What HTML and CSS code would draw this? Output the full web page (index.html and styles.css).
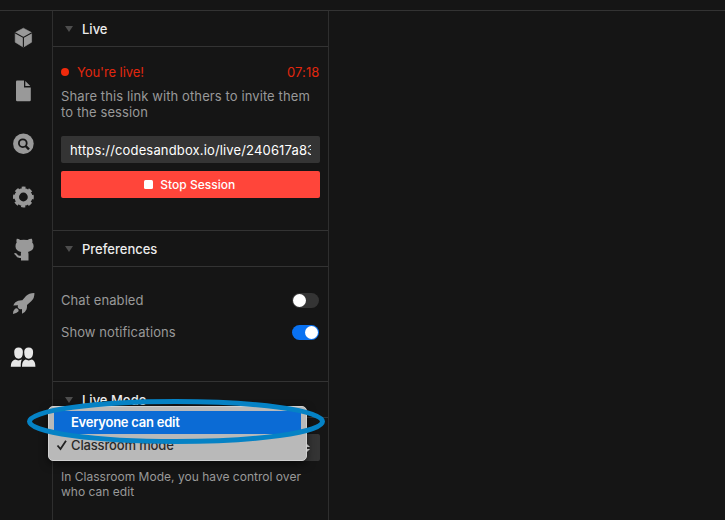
FILE: index.html
```html
<!DOCTYPE html>
<html lang="en">
<head>
<meta charset="utf-8">
<title>Live session</title>
<link rel="stylesheet" href="styles.css">
</head>
<body>
<div class="topbar"></div>
<div class="workspace">
  <nav class="rail">
    <a class="rail-item"><svg width="26" height="26" viewBox="0 0 26 26"><path d="M13.4 3.2 L21.6 7.6 V17.2 L13.4 22.2 L5.2 17.2 V7.6 Z" fill="#999" stroke="#999" stroke-width=".6" stroke-linejoin="round"/><path d="M4.9 7.8 L13.4 12.4 L21.9 7.8 M13.4 12.4 V22.5" fill="none" stroke="#151515" stroke-width="1.1"/></svg></a>
    <a class="rail-item"><svg width="26" height="26" viewBox="0 0 26 26"><path d="M7 2.5 H14 V9.5 H20.8 V22 Q20.8 23.2 19.6 23.2 H7.2 Q6 23.2 6 22 V3.7 Q6 2.5 7 2.5 Z M15.3 3.1 L20.3 8.1 H15.3 Z" fill="#999"/></svg></a>
    <a class="rail-item"><svg width="26" height="26" viewBox="0 0 26 26"><circle cx="13.4" cy="12.8" r="10.3" fill="#999"/><circle cx="12.8" cy="12.2" r="3.9" fill="none" stroke="#151515" stroke-width="1.8"/><path d="M15.6 15 L19 18.4" stroke="#151515" stroke-width="2.4"/></svg></a>
    <a class="rail-item"><svg width="26" height="26" viewBox="0 0 26 26"><circle cx="13.4" cy="13" r="6.7" fill="none" stroke="#999" stroke-width="4.6"/><circle cx="13.4" cy="13" r="9.1" fill="none" stroke="#999" stroke-width="2.6" stroke-dasharray="4.1 3.05" stroke-dashoffset="2.05" transform="rotate(-90 13.4 13)"/></svg></a>
    <a class="rail-item"><svg width="26" height="26" viewBox="0 0 26 26"><path d="M6.8 1.8 Q8.2 1.6 10.3 3.1 Q13.5 2.4 17.5 3.1 Q19.7 1.6 21.8 1.8 Q22.8 3.6 22.2 5.6 Q23.8 7 23.6 9.6 Q23.4 13.8 18 15 Q18.6 16.1 18.5 17.6 V23.6 H11 V20.9 Q7 21.6 5.8 18.6 Q5.3 17.6 4.2 17 Q4 16.1 5.2 16.1 Q6.7 16.3 7.6 17.8 Q8.7 19.4 11 18.6 Q10.6 16.1 11.2 15 Q5.6 13.9 5.5 9.6 Q5.4 7 6.7 5.6 Q6.1 3.6 6.8 1.8 Z" fill="#999"/></svg></a>
    <a class="rail-item"><svg width="26" height="26" viewBox="0 0 26 26"><path d="M24.4 2 Q19.2 1.9 16 5 L12.3 9.2 Q8 9 5.4 11.2 Q4 12.5 3.3 14.5 L8 14.2 Q7.2 16.2 8.4 17.3 Q9.8 18.8 12 18 L12 22.8 Q15.6 21.2 16.6 18.3 Q17.2 16.5 17 14 L21.2 10.2 Q24.7 7 24.4 2 Z M7.3 17.5 Q9.5 19 8.4 20.6 Q6.6 22.5 2.9 22.9 Q3.1 19.4 5 17.8 Q6.2 16.8 7.3 17.5 Z" fill="#999"/></svg></a>
    <a class="rail-item active"><svg width="26" height="26" viewBox="0 0 26 26"><path d="M4.2 8 Q4.2 3.4 8.6 3.4 Q12.9 3.4 12.9 8 Q12.9 14.8 8.6 14.8 Q4.2 14.8 4.2 8 Z M14.2 8 Q14.2 3.4 18.7 3.4 Q23.1 3.4 23.1 8 Q23.1 14.8 18.7 14.8 Q14.2 14.8 14.2 8 Z M.8 22.8 Q.6 17.2 5.1 15.6 Q8.3 17.2 11.9 15.6 Q10.6 17.6 10.8 22.8 Z M12 22.8 Q11.8 17.2 15.5 15.6 Q18.7 17.2 22 15.6 Q25.5 17.2 25.4 22.8 Z" fill="#e6e6e6"/></svg></a>
  </nav>
  <aside class="panel">
    <section class="section live">
      <h2 class="heading"><i class="caret"></i>Live</h2>
      <div class="body">
        <div class="status"><span class="dot"></span><span class="status-label">You're live!</span><span class="time">07:18</span></div>
        <p class="share">Share this link with others to invite them<br>to the session</p>
        <div class="link"><span>https://codesandbox.io/live/240617a83b</span></div>
        <button class="stop"><i></i>Stop Session</button>
      </div>
    </section>
    <section class="section preferences">
      <h2 class="heading"><i class="caret"></i>Preferences</h2>
      <div class="options">
        <div class="option"><span>Chat enabled</span><span class="switch"></span></div>
        <div class="option"><span>Show notifications</span><span class="switch on"></span></div>
      </div>
    </section>
    <section class="section mode">
      <h2 class="heading"><i class="caret"></i>Live Mode</h2>
      <div class="body mode-body">
        <div class="select"><svg width="8" height="10" viewBox="0 0 8 10"><path d="M0 4 L4 0 L8 4 Z M0 6 L4 10 L8 6 Z" fill="#eee"/></svg></div>
        <p class="hint">In Classroom Mode, you have control over<br>who can edit</p>
      </div>
      <div class="menu">
        <div class="menu-item selected"><span>Everyone can edit</span></div>
        <div class="menu-item"><svg class="check" width="12" height="12" viewBox="0 0 12 12"><path d="M1.5 6.5 L4.5 10 L10 1.7" fill="none" stroke="#222" stroke-width="1.8"/></svg><span>Classroom mode</span></div>
      </div>
      <svg class="highlight" width="300" height="48" viewBox="0 0 300 48"><ellipse cx="150" cy="23.5" rx="146.5" ry="20" fill="none" stroke="#0582c5" stroke-width="5"/></svg>
    </section>
  </aside>
  <main class="editor"></main>
</div>
</body>
</html>
```
FILE: styles.css
```css
* { box-sizing: border-box; }
body {
  margin: 0;
  height: 520px;
  overflow: hidden;
  background: #151515;
  color: #999;
  font: 13px/16px Inter, "Liberation Sans", sans-serif;
}
.topbar { height: 11px; border-bottom: 1px solid #333; }
.workspace { display: flex; height: 509px; }
.rail { width: 52px; flex: none; padding-right: 6px; }
.rail-item { display: flex; align-items: center; justify-content: center; height: 53.2px; }
.rail-item svg { display: block; }
.panel { width: 277px; flex: none; border: solid #2e2e2e; border-width: 0 1px; }
.editor { flex: 1; }
.section { position: relative; }
.live { height: 219px; }
.preferences { height: 151px; border-top: 1px solid #333; }
.mode { border-top: 1px solid #333; }
.heading {
  display: flex;
  align-items: center;
  height: 36px;
  margin: 0;
  padding-left: 12px;
  border-bottom: 1px solid #333;
  color: #ececec;
  font-size: 13px;
  font-weight: 500;
}
.caret {
  margin-right: 9px;
  border: solid transparent;
  border-width: 6px 4.5px 0;
  border-top-color: #4d4d4d;
}
.body { padding: 17px 8.5px 0 8px; }
.status { display: flex; align-items: center; color: #e1270e; }
.dot { width: 8px; height: 8px; margin-right: 8px; border-radius: 50%; background: #f02a0c; }
.status-label { letter-spacing: -0.08px; }
.time { margin-left: auto; letter-spacing: 0.1px; }
p { margin: 0; }
.share { margin-top: 8px; letter-spacing: 0.1px; white-space: nowrap; }
.link {
  height: 27px;
  margin-top: 16px;
  padding: 0 9px;
  border-radius: 2px;
  background: #343434;
  color: #fff;
  line-height: 28px;
}
.link span { display: block; overflow: hidden; white-space: nowrap; letter-spacing: 0.15px; }
.stop {
  display: flex;
  align-items: center;
  justify-content: center;
  width: 100%;
  height: 27px;
  margin-top: 8px;
  padding: 0 1px 0 0;
  border: 0;
  border-radius: 2px;
  background: #ff453a;
  color: #fff;
  font: 500 12px/16px Inter, sans-serif;
}
.stop i { width: 9px; height: 9px; margin-right: 7px; border-radius: 1.5px; background: #fff; }
.options { display: grid; gap: 16px; padding: 25px 9px 0 8px; }
.option { display: flex; align-items: center; justify-content: space-between; letter-spacing: 0.08px; }
.switch { display: flex; align-items: center; width: 27px; height: 15px; border-radius: 8px; background: #343434; }
.switch::before { content: ""; width: 13px; height: 13px; margin: 0 1px; border-radius: 50%; background: #fff; }
.switch.on { justify-content: flex-end; background: #0971f1; }
.mode-body { padding-top: 16px; }
.select { display: flex; align-items: center; justify-content: flex-end; height: 27px; padding-right: 10px; border-radius: 2px; background: #343434; }
.hint { margin-top: 8px; font-size: 12px; line-height: 15px; letter-spacing: 0.02px; white-space: nowrap; }
.menu {
  position: absolute;
  top: 24px;
  left: -5px;
  width: 259px;
  height: 55px;
  padding: 4px 5px 5px;
  border: 1px solid #d0d0d0;
  border-radius: 5px;
  background: #b9b9b9;
  color: #292929;
  box-shadow: 0 3px 9px #0008;
  font-weight: 500;
  letter-spacing: -0.15px;
}
.menu-item { position: relative; height: 22px; padding-left: 17px; line-height: 23px; }
.menu-item.selected { height: 23px; background: #0b6bd5; color: #fff; font-weight: 600; letter-spacing: -0.25px; }
.check { position: absolute; top: 5px; left: 2px; }
.highlight { position: absolute; top: 16px; left: -27px; }
```
